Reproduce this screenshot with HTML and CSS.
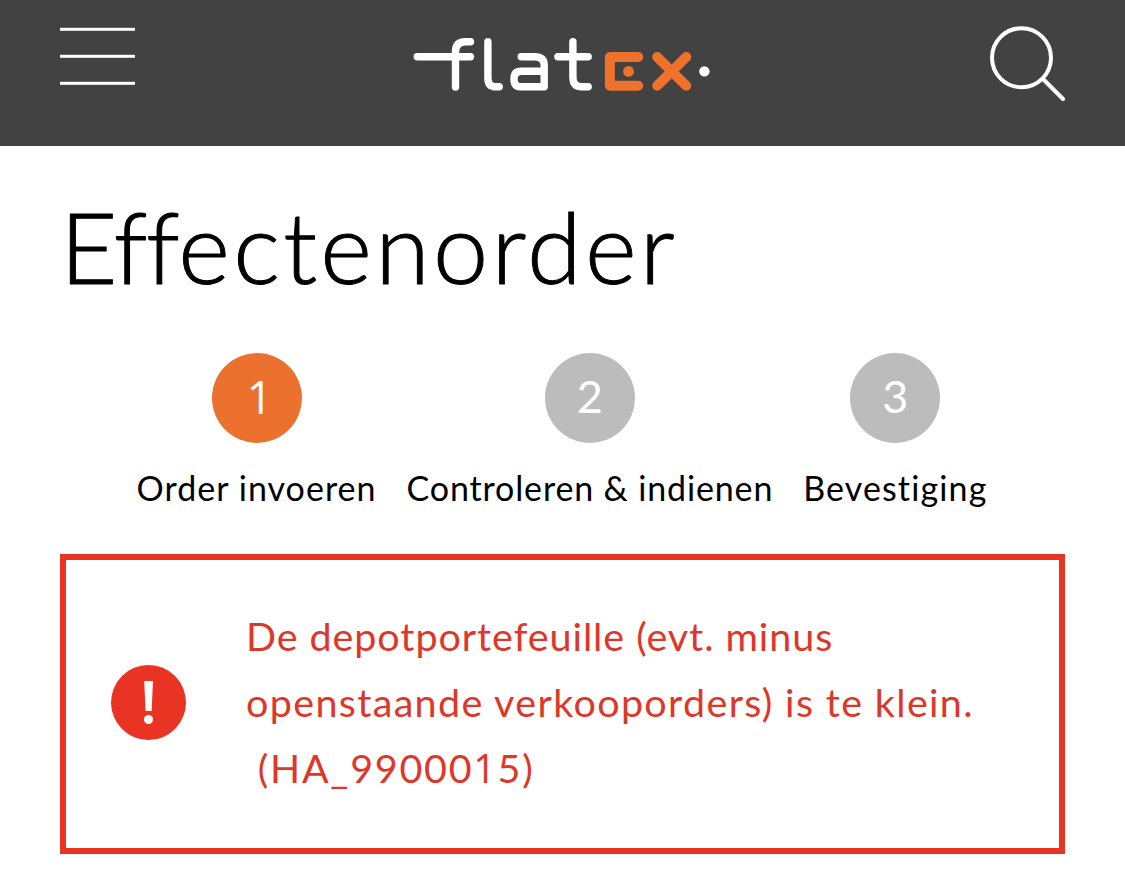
FILE: index.html
```
<!DOCTYPE html>
<html lang="nl">
<head>
<meta charset="utf-8">
<title>Effectenorder</title>
<link rel="stylesheet" href="styles.css">
</head>
<body>
<header class="topbar">
  <svg class="menu" width="75" height="60" viewBox="0 0 75 60" fill="#fff"><rect y="1.8" width="75" height="3"/><rect y="28.8" width="75" height="3"/><rect y="55.8" width="75" height="3"/></svg>
  <svg class="logo" width="300" height="60" viewBox="412.8 34 300 60" fill="none" stroke="#fff" stroke-width="7.4" stroke-linecap="round" stroke-linejoin="round">
    <path d="M417 56.7H470.3M455.3 87V52Q455.3 41.7 465 41.7H470.3"/>
    <path d="M487.7 41.7V78Q487.7 86.7 495 86.7H499"/>
    <path d="M521 56.7H534Q544 56.7 544 65V86.7H520Q513.8 86.7 513.8 79Q513.8 71.3 521 71.3H544"/>
    <path d="M557.7 56.7H588M572.7 41.7V77Q572.7 86.7 581 86.7H588"/>
    <g stroke="#ee712c" stroke-width="10"><path d="M638 57H609.7V85.8H638"/><path d="M657 57L686 85.8M686 57L657 85.8"/></g>
    <circle cx="628.3" cy="71.4" r="5.4" fill="#ee712c" stroke="none"/>
    <circle cx="704.2" cy="71.4" r="5.2" fill="#fff" stroke="none"/>
  </svg>
  <svg class="search" width="75" height="76" viewBox="0 0 75 76" fill="none" stroke="#fff" stroke-width="4" stroke-linecap="round"><circle cx="31.5" cy="31.7" r="29.5"/><path d="M53 53L73 73"/></svg>
</header>
<main class="page">
  <h1 class="title"><span class="tight">Eff</span>ectenorder</h1>
  <ol class="steps">
    <li class="step"><span class="num active">1</span><span class="label first">Order invoeren</span></li>
    <li class="step"><span class="num">2</span><span class="label second">Controleren &amp; indienen</span></li>
    <li class="step"><span class="num">3</span><span class="label third">Bevestiging</span></li>
  </ol>
  <section class="alert">
    <svg class="alert-icon" width="75" height="75" viewBox="0 0 75 75"><circle cx="37.5" cy="37.5" r="37.5" fill="#e93323"/><path d="M33.2 16H42L40.6 46H34.6Z" fill="#fff"/><circle cx="37.5" cy="54.5" r="4.5" fill="#fff"/></svg>
    <p class="message"><span class="line-one">De depotportefeuille (evt. minus</span><br><span class="line-two">openstaande verkooporders) is te klein.</span><br><span class="line-three">&nbsp;(HA_99000<span class="plain-one">1</span>5)</span></p>
  </section>
</main>
</body>
</html>
```
FILE: styles.css
```
body {
  margin: 0;
  background: #fff;
  color: #000;
  font-family: Lato, "Open Sans", sans-serif;
  font-variant-ligatures: none;
}
.topbar {
  height: 146px;
  box-sizing: border-box;
  padding: 26px 60px 0;
  background: #424242;
  display: flex;
  justify-content: space-between;
  align-items: flex-start;
}
.logo { margin-top: 8px; }
.page { padding: 0 60px; }
.title {
  margin: 40px 0 0;
  font-size: 99px;
  font-weight: 300;
  line-height: 120px;
  letter-spacing: 3.3px;
  -webkit-text-stroke: 1px #000;
}
.tight { letter-spacing: -1.4px; }
.steps {
  list-style: none;
  margin: 47px 0 0;
  padding: 0 1px 0 0;
  display: flex;
  justify-content: center;
  gap: 30px;
}
.step {
  display: flex;
  flex-direction: column;
  align-items: center;
}
.num {
  box-sizing: border-box;
  width: 90px;
  height: 90px;
  border-radius: 50%;
  background: #bcbcbc;
  color: #fff;
  font-size: 45px;
  line-height: 87px;
  text-align: center;
}
.active {
  padding-left: 6px;
  background: #ec712e;
  font-family: "Open Sans", sans-serif;
  line-height: 88px;
}
.label {
  margin-top: 22px;
  font-size: 34px;
  line-height: 46px;
  white-space: nowrap;
}
.first { letter-spacing: 1.03px; }
.second { letter-spacing: 0.85px; }
.third { letter-spacing: 1.12px; }
.alert {
  box-sizing: border-box;
  height: 300px;
  margin-top: 43px;
  border: 6px solid #e93323;
  padding: 0 45px 4px;
  display: flex;
  align-items: center;
  gap: 60px;
  color: #de3729;
}
.message {
  margin: 0;
  font-size: 39.5px;
  line-height: 66px;
  white-space: nowrap;
}
.line-one { letter-spacing: 0.92px; }
.line-two { letter-spacing: 1.33px; }
.line-three { letter-spacing: 1.7px; }
.plain-one {
  font-family: "Open Sans", sans-serif;
  line-height: 1;
}
```
